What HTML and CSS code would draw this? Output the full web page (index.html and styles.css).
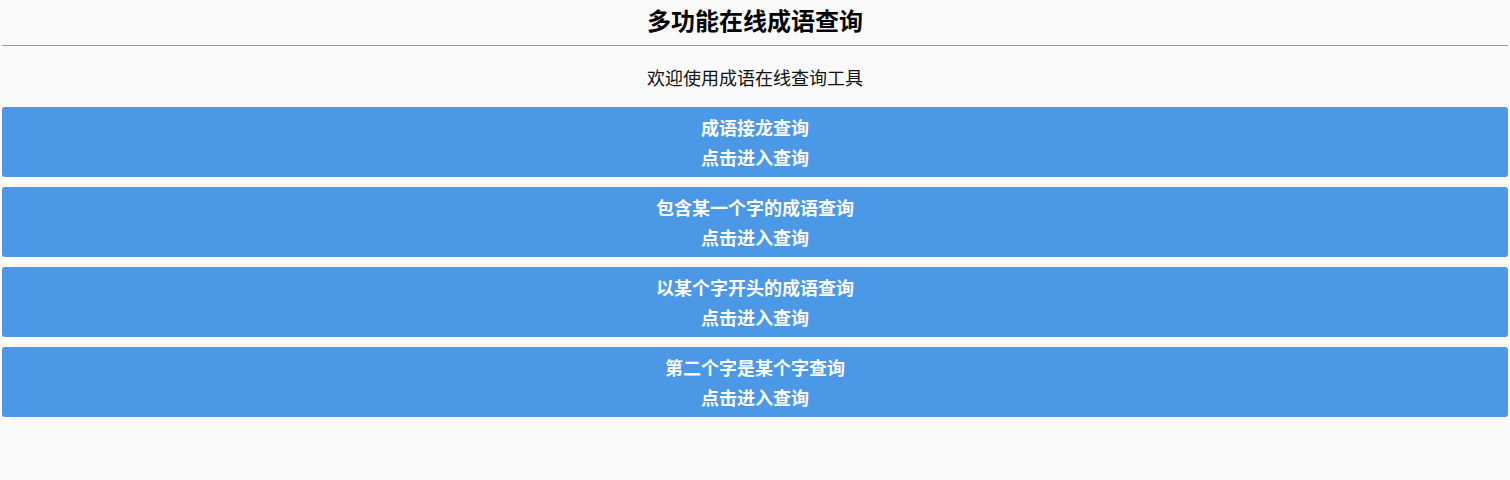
FILE: index.html
```html
<!DOCTYPE html>
<html lang="zh">
<head>
<meta charset="utf-8">
<title>多功能在线成语查询</title>
<link rel="stylesheet" href="styles.css">
</head>
<body>
<header class="top">
  <h1 class="title">多功能在线成语查询</h1>
</header>
<p class="intro">欢迎使用成语在线查询工具</p>
<nav class="menu">
  <a class="item" href="#"><span>成语接龙查询</span><span>点击进入查询</span></a>
  <a class="item" href="#"><span>包含某一个字的成语查询</span><span>点击进入查询</span></a>
  <a class="item" href="#"><span>以某个字开头的成语查询</span><span>点击进入查询</span></a>
  <a class="item" href="#"><span>第二个字是某个字查询</span><span>点击进入查询</span></a>
</nav>
</body>
</html>
```

FILE: styles.css
```css
html, body {
  background: #fafafa;
}
body {
  margin: 0 2px;
  font-family: "Noto Sans CJK SC", "Noto Sans", sans-serif;
  color: #111;
}
.top {
  height: 45px;
  border-bottom: 1px solid #9a9a9a;
  display: flex;
  align-items: flex-start;
  justify-content: center;
}
.title {
  margin: 0;
  font-size: 24px;
  line-height: 40px;
  font-weight: bold;
  color: #000;
}
.intro {
  margin: 0;
  height: 61px;
  line-height: 62px;
  text-align: center;
  font-size: 18px;
  color: #111;
}
.menu {
  display: flex;
  flex-direction: column;
  gap: 10px;
}
.item {
  display: flex;
  flex-direction: column;
  align-items: center;
  justify-content: center;
  height: 70px;
  background: #4a98e6;
  border-radius: 3px;
  color: #fff;
  text-decoration: none;
  font-size: 18px;
  font-weight: bold;
  line-height: 30px;
}
```
